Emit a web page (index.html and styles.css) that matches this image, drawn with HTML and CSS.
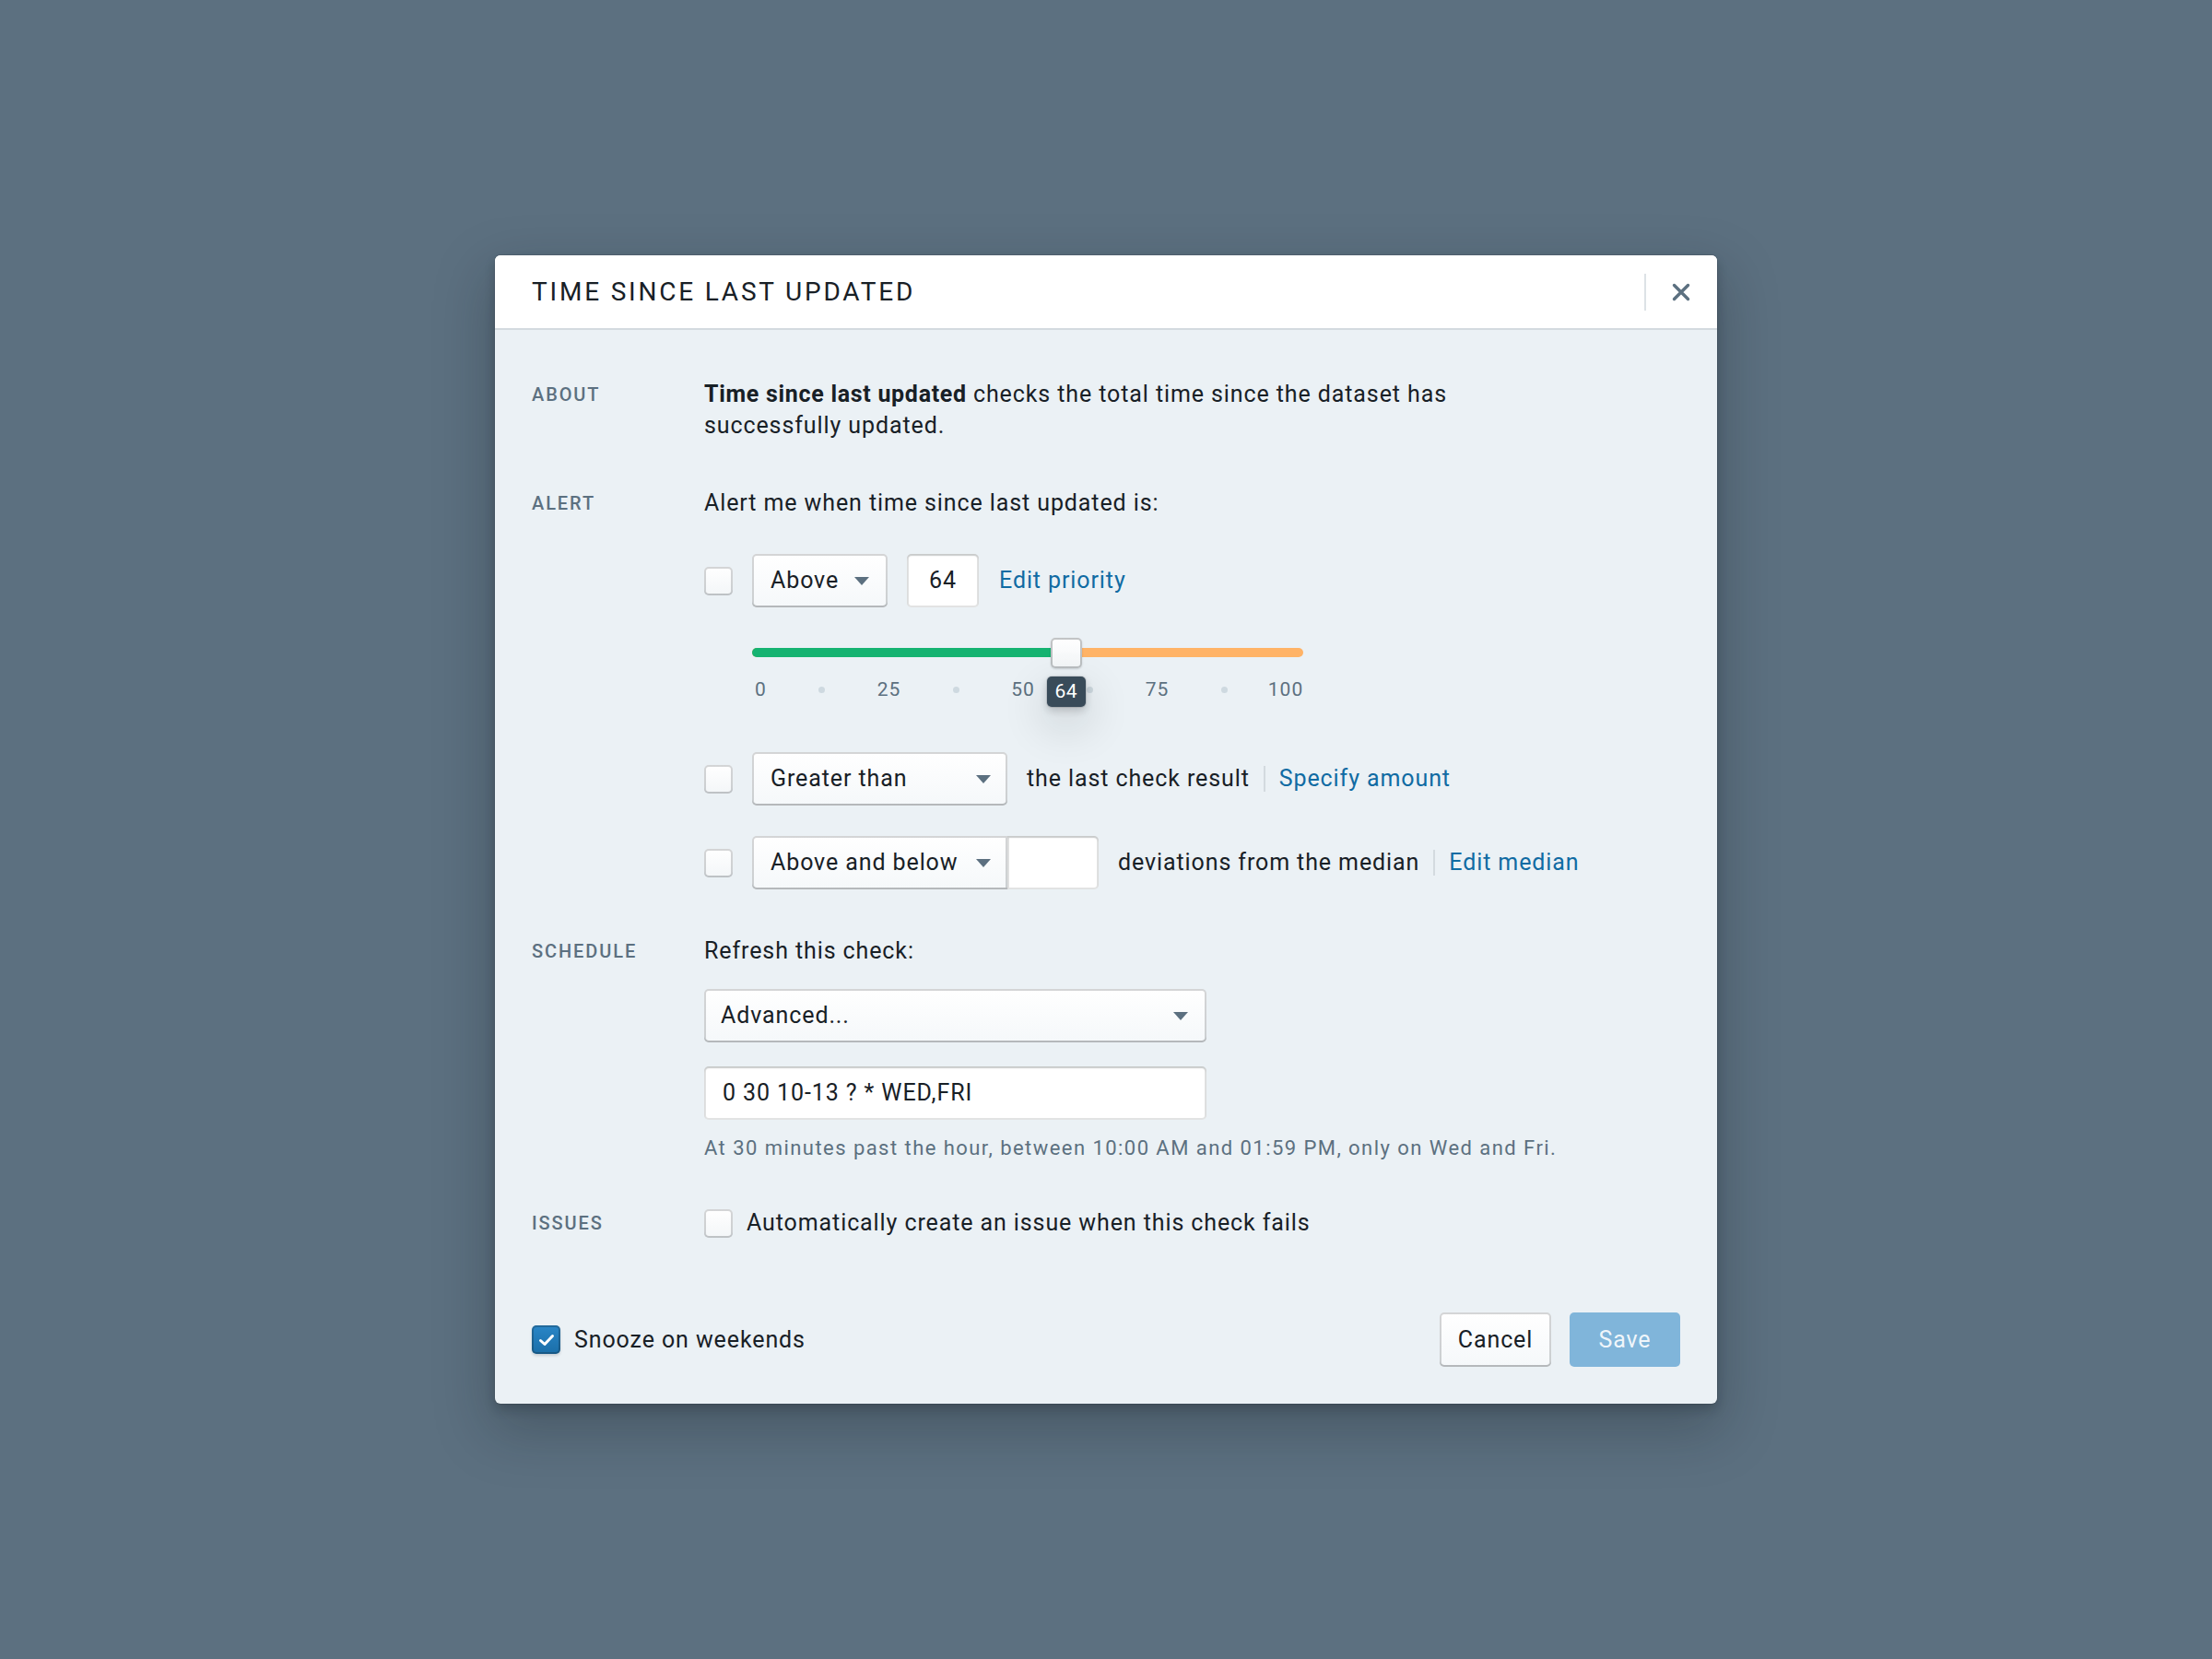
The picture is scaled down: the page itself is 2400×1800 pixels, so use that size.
FILE: index.html
```html
<!DOCTYPE html>
<html lang="en">
<head>
  <meta charset="UTF-8">
  <meta name="viewport" content="width=device-width, initial-scale=1.0">
  <title>Time Since Last Updated</title>
  <link rel="stylesheet" href="styles.css">
</head>
<body>
  <div class="overlay">
    <div class="dialog">
      <div class="dialog-header">
        <h2 class="dialog-title">TIME SINCE LAST UPDATED</h2>
        <span class="header-sep"></span>
        <button type="button" class="close-btn" aria-label="Close">
          <svg width="20" height="20" viewBox="0 0 20 20">
            <path d="M2.5 2.5 L17.5 17.5 M17.5 2.5 L2.5 17.5" stroke="#5c7080" stroke-width="3.4" stroke-linecap="round"/>
          </svg>
        </button>
      </div>

      <div class="dialog-body">
        <div class="section">
          <div class="section-label">About</div>
          <div class="section-content">
            <p class="about-text"><strong>Time since last updated</strong> checks the total time since the dataset has<br>successfully updated.</p>
          </div>
        </div>

        <div class="section">
          <div class="section-label">Alert</div>
          <div class="section-content">
            <p class="lead">Alert me when time since last updated is:</p>

            <div class="alert-row first-row">
              <span class="checkbox"></span>
              <div class="select select-above">Above <span class="caret"></span></div>
              <div class="text-input input-num">64</div>
              <a class="link" href="#">Edit priority</a>
            </div>

            <div class="slider">
              <div class="track">
                <div class="track-fill" style="width: 57%"></div>
              </div>
              <div class="handle" style="left: 57%"></div>
              <div class="ticks">
                <span class="tick tick-first">0</span>
                <span class="dot"></span>
                <span class="tick">25</span>
                <span class="dot"></span>
                <span class="tick">50</span>
                <span class="dot"></span>
                <span class="tick">75</span>
                <span class="dot"></span>
                <span class="tick tick-last">100</span>
              </div>
              <div class="value-badge" style="left: 57%">64</div>
            </div>

            <div class="alert-row after-slider">
              <span class="checkbox"></span>
              <div class="select select-wide">Greater than <span class="caret"></span></div>
              <span class="row-text">the last check result</span>
              <span class="v-sep"></span>
              <a class="link" href="#">Specify amount</a>
            </div>

            <div class="alert-row">
              <span class="checkbox"></span>
              <div class="control-group">
                <div class="select select-wide select-joined">Above and below <span class="caret"></span></div>
                <div class="text-input input-joined"></div>
              </div>
              <span class="row-text">deviations from the median</span>
              <span class="v-sep"></span>
              <a class="link" href="#">Edit median</a>
            </div>
          </div>
        </div>

        <div class="section">
          <div class="section-label">Schedule</div>
          <div class="section-content">
            <p class="lead">Refresh this check:</p>
            <div class="select select-full">Advanced... <span class="caret"></span></div>
            <div class="text-input input-full">0 30 10-13 ? * WED,FRI</div>
            <p class="helper">At 30 minutes past the hour, between 10:00 AM and 01:59 PM, only on Wed and Fri.</p>
          </div>
        </div>

        <div class="section section-issues">
          <div class="section-label">Issues</div>
          <div class="section-content">
            <label class="check-label">
              <span class="checkbox"></span>
              Automatically create an issue when this check fails
            </label>
          </div>
        </div>
      </div>

      <div class="dialog-footer">
        <label class="check-label">
          <span class="checkbox checked">
            <svg width="18" height="14" viewBox="0 0 18 14">
              <path d="M2.5 7.5 L7 11.5 L15.5 2.5" fill="none" stroke="#fff" stroke-width="3" stroke-linecap="round" stroke-linejoin="round"/>
            </svg>
          </span>
          Snooze on weekends
        </label>
        <div class="footer-actions">
          <button type="button" class="btn">Cancel</button>
          <button type="button" class="btn btn-primary" disabled>Save</button>
        </div>
      </div>
    </div>
  </div>
</body>
</html>
```

FILE: styles.css
```css
body {
  margin: 0;
  background: #5c7080;
  font-family: Roboto, "Liberation Sans", sans-serif;
  color: #182026;
}
.overlay {
  min-height: 100vh;
  display: flex;
  align-items: center;
  justify-content: center;
}
.dialog {
  width: 1326px;
  background: #ebf1f5;
  border-radius: 6px;
  box-shadow: 0 0 0 1px rgba(16, 22, 26, 0.1), 0 6px 12px rgba(16, 22, 26, 0.2), 0 24px 60px 6px rgba(16, 22, 26, 0.25);
  overflow: hidden;
}
.dialog-header {
  height: 79px;
  display: flex;
  align-items: center;
  padding: 0 22px 0 40px;
  background: #fff;
  border-bottom: 2px solid #d3dadf;
}
.dialog-title {
  flex: 1;
  margin: 0;
  font-size: 28px;
  font-weight: 400;
  letter-spacing: 2.8px;
  color: #182026;
}
.header-sep {
  width: 2px;
  height: 40px;
  background: #dde2e6;
  margin-right: 21px;
}
.close-btn {
  width: 34px;
  height: 34px;
  padding: 0;
  border: none;
  background: none;
  display: flex;
  align-items: center;
  justify-content: center;
}

.dialog-body {
  padding: 53px 40px 80px 40px;
}
.section {
  display: grid;
  grid-template-columns: 187px 1fr;
  margin-bottom: 50px;
}
.section-issues {
  margin-top: 6px;
  margin-bottom: 0;
}
.section-label {
  font-size: 20px;
  font-weight: 500;
  letter-spacing: 1.9px;
  text-transform: uppercase;
  color: #5c7080;
  line-height: 34px;
}
.section-content {
  font-size: 25px;
  letter-spacing: 0.9px;
  line-height: 34px;
}
.about-text,
.lead {
  margin: 0;
}
.about-text strong {
  font-weight: 700;
  letter-spacing: 0.7px;
}

.alert-row {
  display: flex;
  align-items: center;
  height: 58px;
  margin-top: 33px;
}
.alert-row.first-row {
  margin-top: 38px;
}
.alert-row.after-slider {
  margin-top: 53px;
}
.checkbox {
  width: 31px;
  height: 31px;
  box-sizing: border-box;
  border-radius: 5px;
  background: linear-gradient(to bottom, #fff, #f3f6f8);
  box-shadow: inset 0 0 0 2px rgba(16, 22, 26, 0.18), inset 0 -2px 0 rgba(16, 22, 26, 0.06);
  margin-right: 21px;
  flex-shrink: 0;
  display: inline-flex;
  align-items: center;
  justify-content: center;
}
.checkbox.checked {
  background: linear-gradient(to bottom, #2a86c7, #1a6ea8);
  box-shadow: inset 0 0 0 2px rgba(16, 22, 26, 0.25), 0 2px 3px rgba(16, 22, 26, 0.15);
}
.select {
  height: 58px;
  box-sizing: border-box;
  display: flex;
  align-items: center;
  justify-content: space-between;
  padding: 0 20px;
  border-radius: 5px;
  background: linear-gradient(to bottom, #fff, #f5f8fa);
  box-shadow: inset 0 0 0 2px rgba(16, 22, 26, 0.18), inset 0 -2px 0 rgba(16, 22, 26, 0.12);
}
.caret {
  width: 0;
  height: 0;
  border-left: 8px solid transparent;
  border-right: 8px solid transparent;
  border-top: 9px solid #5c7080;
  margin-left: 12px;
}
.select-above {
  width: 147px;
}
.select-wide {
  width: 277px;
  padding-right: 18px;
}
.select-full {
  width: 545px;
  padding: 0 20px 0 18px;
  margin-top: 24px;
}
.text-input {
  height: 58px;
  box-sizing: border-box;
  display: flex;
  align-items: center;
  background: #fff;
  border-radius: 5px;
  box-shadow: inset 0 0 0 2px rgba(16, 22, 26, 0.12), inset 0 2px 2px rgba(16, 22, 26, 0.12);
}
.input-num {
  width: 78px;
  justify-content: center;
  margin-left: 21px;
  margin-right: 22px;
}
.input-full {
  width: 545px;
  padding-left: 20px;
  margin-top: 26px;
}
.control-group {
  display: flex;
  margin-right: 21px;
}
.select-joined {
  border-radius: 5px 0 0 5px;
}
.input-joined {
  width: 99px;
  border-radius: 0 5px 5px 0;
}
.row-text {
  margin-left: 21px;
}
.control-group + .row-text {
  margin-left: 0;
}
.v-sep {
  width: 2px;
  height: 28px;
  background: #d3dadf;
  margin: 0 15px;
}
.link {
  color: #106ba3;
  text-decoration: none;
}

.slider {
  position: relative;
  width: 598px;
  margin: 44px 0 0 52px;
}
.track {
  height: 10px;
  border-radius: 5px;
  background: #ffb366;
  overflow: hidden;
}
.track-fill {
  height: 100%;
  background: #15b371;
}
.handle {
  position: absolute;
  top: -11px;
  width: 34px;
  height: 33px;
  box-sizing: border-box;
  transform: translateX(-50%);
  border-radius: 5px;
  background: linear-gradient(to bottom, #fff, #f2f5f7);
  box-shadow: inset 0 0 0 2px rgba(16, 22, 26, 0.25), 0 1px 2px rgba(16, 22, 26, 0.15);
}
.ticks {
  display: flex;
  justify-content: space-between;
  align-items: center;
  padding-right: 13px;
  margin-top: 20px;
  font-size: 21px;
  letter-spacing: 1px;
  line-height: 30px;
  color: #5c7080;
}
.tick {
  width: 0;
  display: flex;
  justify-content: center;
  white-space: nowrap;
}
.tick-first {
  justify-content: flex-start;
  padding-left: 3px;
}
.tick-last {
  transform: translateX(-6px);
}
.dot {
  width: 7px;
  height: 7px;
  margin: 0 -3.5px;
  border-radius: 50%;
  background: #ced9e0;
}
.value-badge {
  position: absolute;
  top: 31px;
  width: 42px;
  height: 33px;
  transform: translateX(-50%);
  background: #394b59;
  color: #fff;
  border-radius: 5px;
  font-size: 21px;
  letter-spacing: 0.5px;
  line-height: 33px;
  text-align: center;
  box-shadow: 0 0 0 1px rgba(16, 22, 26, 0.1), 0 4px 8px rgba(16, 22, 26, 0.2), 0 18px 46px 6px rgba(16, 22, 26, 0.12);
}

.helper {
  margin: 17px 0 0;
  font-size: 22px;
  letter-spacing: 1.45px;
  line-height: 28px;
  color: #5c7080;
}
.check-label {
  display: flex;
  align-items: center;
  font-size: 25px;
  letter-spacing: 0.9px;
  line-height: 34px;
}
.section .check-label .checkbox {
  margin-right: 15px;
}

.dialog-footer {
  display: flex;
  justify-content: space-between;
  align-items: center;
  padding: 0 40px 40px 40px;
}
.dialog-footer .checkbox {
  margin-right: 15px;
}
.footer-actions {
  display: flex;
  gap: 20px;
}
.btn {
  width: 121px;
  height: 59px;
  font-family: inherit;
  font-size: 25px;
  letter-spacing: 0.9px;
  color: #182026;
  border: none;
  border-radius: 5px;
  background: linear-gradient(to bottom, #fff, #f5f8fa);
  box-shadow: inset 0 0 0 2px rgba(16, 22, 26, 0.18), inset 0 -2px 0 rgba(16, 22, 26, 0.12);
}
.btn-primary {
  width: 120px;
  background: #80b5da;
  color: rgba(255, 255, 255, 0.9);
  box-shadow: none;
}
```
